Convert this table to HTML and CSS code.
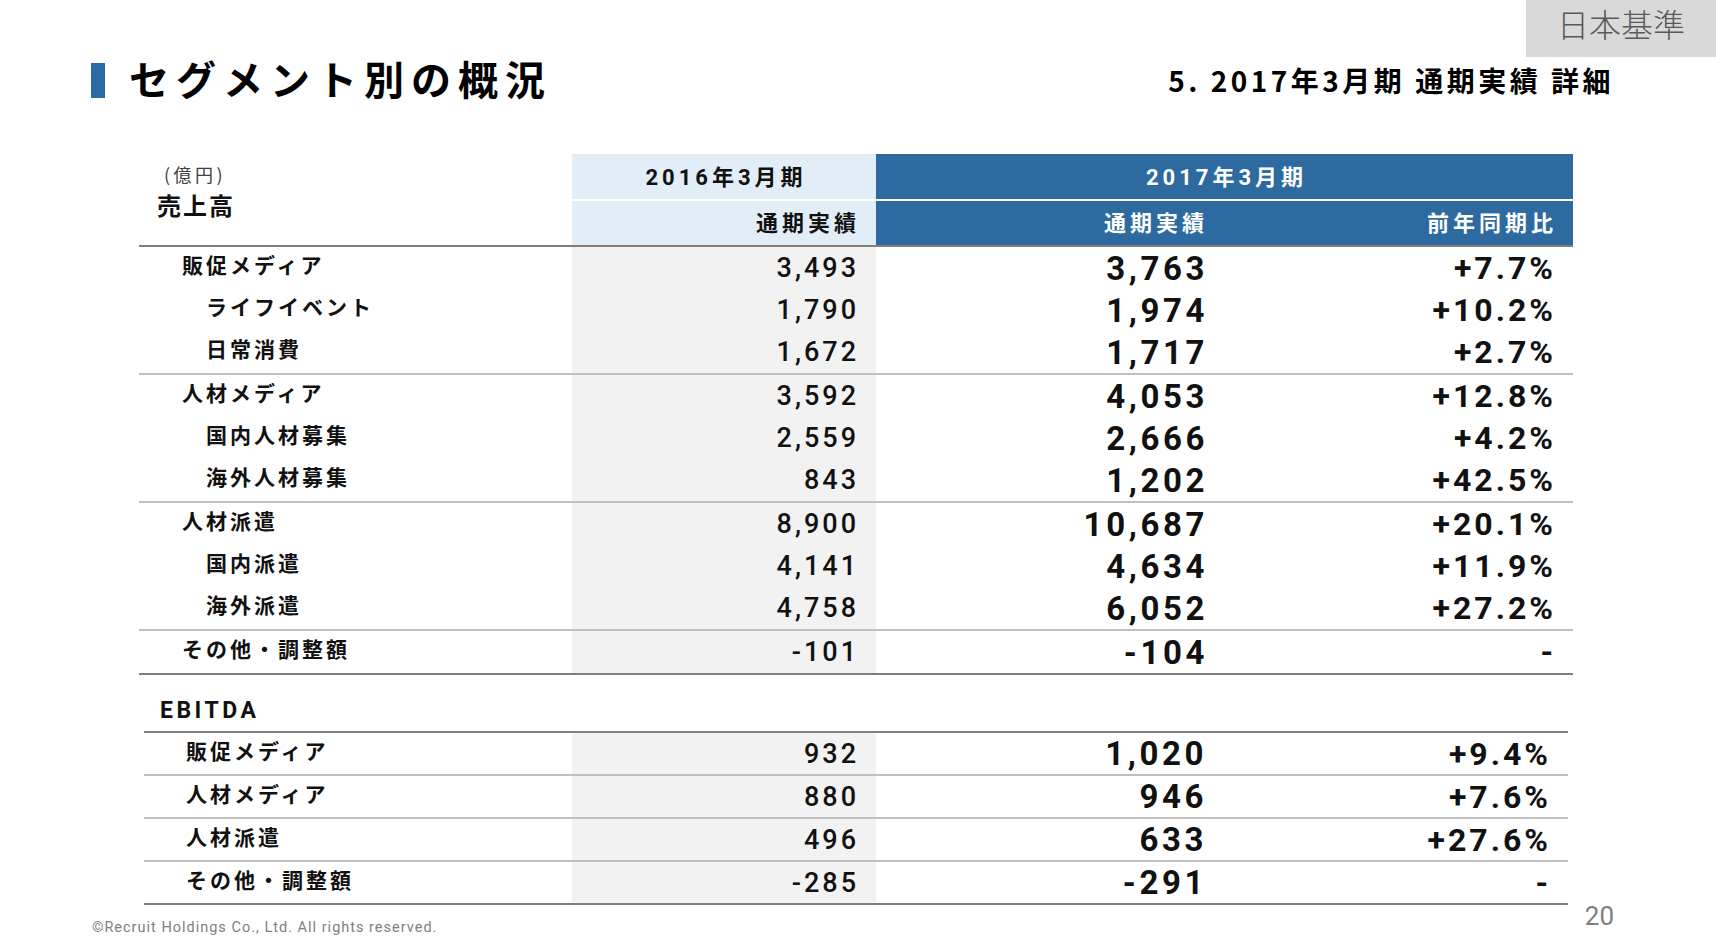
FILE: index.html
```html
<!DOCTYPE html>
<html lang="ja">
<head>
<meta charset="utf-8">
<title>セグメント別の概況</title>
<link rel="stylesheet" href="styles.css">
</head>
<body>
<div class="slide">
  <div class="badge">日本基準</div>
  <header class="header">
    <div class="title"><span class="title-bar"></span><h1>セグメント別の概況</h1></div>
    <div class="subtitle">5. 2017年3月期 通期実績 詳細</div>
  </header>

  <section class="sales">
    <div class="thead">
      <div class="th-label"><span class="unit">(億円)</span><span class="section-name">売上高</span></div>
      <div class="th prev r1">2016年3月期</div>
      <div class="th cur r1 span2">2017年3月期</div>
      <div class="th prev r2">通期実績</div>
      <div class="th cur r2">通期実績</div>
      <div class="th cur r2">前年同期比</div>
    </div>

    <div class="row"><div class="lbl l1">販促メディア</div><div class="pv">3,493</div><div class="cv">3,763</div><div class="pc">+7.7%</div></div>
    <div class="row"><div class="lbl l2">ライフイベント</div><div class="pv">1,790</div><div class="cv">1,974</div><div class="pc">+10.2%</div></div>
    <div class="row sep"><div class="lbl l2">日常消費</div><div class="pv">1,672</div><div class="cv">1,717</div><div class="pc">+2.7%</div></div>

    <div class="row"><div class="lbl l1">人材メディア</div><div class="pv">3,592</div><div class="cv">4,053</div><div class="pc">+12.8%</div></div>
    <div class="row"><div class="lbl l2">国内人材募集</div><div class="pv">2,559</div><div class="cv">2,666</div><div class="pc">+4.2%</div></div>
    <div class="row sep"><div class="lbl l2">海外人材募集</div><div class="pv">843</div><div class="cv">1,202</div><div class="pc">+42.5%</div></div>

    <div class="row"><div class="lbl l1">人材派遣</div><div class="pv">8,900</div><div class="cv">10,687</div><div class="pc">+20.1%</div></div>
    <div class="row"><div class="lbl l2">国内派遣</div><div class="pv">4,141</div><div class="cv">4,634</div><div class="pc">+11.9%</div></div>
    <div class="row sep"><div class="lbl l2">海外派遣</div><div class="pv">4,758</div><div class="cv">6,052</div><div class="pc">+27.2%</div></div>

    <div class="row end"><div class="lbl l1">その他・調整額</div><div class="pv">-101</div><div class="cv">-104</div><div class="pc">-</div></div>
  </section>

  <div class="ebitda-label">EBITDA</div>

  <section class="ebitda">
    <div class="row sep"><div class="lbl">販促メディア</div><div class="pv">932</div><div class="cv">1,020</div><div class="pc">+9.4%</div></div>
    <div class="row sep"><div class="lbl">人材メディア</div><div class="pv">880</div><div class="cv">946</div><div class="pc">+7.6%</div></div>
    <div class="row sep"><div class="lbl">人材派遣</div><div class="pv">496</div><div class="cv">633</div><div class="pc">+27.6%</div></div>
    <div class="row end"><div class="lbl">その他・調整額</div><div class="pv">-285</div><div class="cv">-291</div><div class="pc">-</div></div>
  </section>

  <footer class="footer">
    <span class="copy">©Recruit Holdings Co., Ltd. All rights reserved.</span>
    <span class="page">20</span>
  </footer>
</div>
</body>
</html>
```
FILE: styles.css
```css
html, body {
  margin: 0;
  padding: 0;
  background: #ffffff;
}

body {
  font-family: "Roboto", "Noto Sans CJK JP", "Noto Sans", sans-serif;
  color: #111111;
}

.slide {
  position: relative;
  width: 1716px;
  height: 950px;
  overflow: hidden;
}

/* corner badge */
.badge {
  position: absolute;
  top: 0;
  right: 0;
  width: 190px;
  height: 57px;
  background: #d9d9d9;
  color: #595959;
  font-family: "Noto Sans CJK JP", sans-serif;
  font-weight: 300;
  font-size: 32px;
  line-height: 46px;
  text-align: center;
}

/* title row */
.header {
  box-sizing: border-box;
  height: 154px;
  display: flex;
  justify-content: space-between;
  align-items: flex-start;
  padding: 54px 102px 0 91px;
}

.title {
  display: flex;
  align-items: center;
}

.title-bar {
  display: block;
  width: 14px;
  height: 35px;
  background: #2b6aa3;
  margin-top: 5px;
}

.title h1 {
  margin: 0 0 0 24px;
  font-family: "Noto Sans CJK JP", sans-serif;
  font-weight: 700;
  font-size: 40px;
  line-height: 48px;
  letter-spacing: 7px;
  color: #000;
}

.subtitle {
  margin-top: 6px;
  font-family: "Noto Sans CJK JP", sans-serif;
  font-weight: 700;
  font-size: 28px;
  line-height: 40px;
  letter-spacing: 3.5px;
  color: #000;
}

/* tables */
.sales {
  margin-left: 139px;
  width: 1434px;
}

.thead {
  display: grid;
  grid-template-columns: 433px 304px 348px 349px;
  grid-template-rows: 45px 44px;
  row-gap: 2px;
  border-bottom: 2px solid #7f7f7f;
}

.th-label {
  grid-row: 1 / 3;
  grid-column: 1;
  display: flex;
  flex-direction: column;
  padding-top: 7px;
}

.unit {
  font-family: "Noto Sans CJK JP", sans-serif;
  font-size: 18px;
  line-height: 27px;
  letter-spacing: 3.5px;
  color: #404040;
  padding-left: 25px;
}

.section-name {
  font-family: "Noto Sans CJK JP", sans-serif;
  font-weight: 700;
  font-size: 24px;
  line-height: 34px;
  letter-spacing: 2px;
  padding-left: 18px;
}

.th {
  display: flex;
  align-items: center;
  font-family: "Roboto", "Noto Sans CJK JP", sans-serif;
  font-weight: 700;
  font-size: 22px;
  letter-spacing: 4px;
  padding-bottom: 4px;
  box-sizing: border-box;
}

.th.r1 {
  justify-content: center;
  padding-left: 4px;
}

.th.r2 {
  justify-content: flex-end;
  padding-right: 16px;
}

.th.span2 {
  grid-column: 3 / 5;
}

.th.prev {
  background: #e1eef8;
  color: #111;
}

.th.cur {
  background: #2c6a9f;
  color: #ffffff;
}

.row {
  display: grid;
  grid-template-columns: 433px 304px 348px 349px;
  height: 42px;
}

.row.sep {
  border-bottom: 2px solid #bfbfbf;
}

.row.end {
  border-bottom: 2px solid #7f7f7f;
}

.row > div {
  display: flex;
  align-items: center;
}

.lbl {
  font-family: "Noto Sans CJK JP", sans-serif;
  font-weight: 700;
  font-size: 21px;
  letter-spacing: 3px;
  padding-bottom: 8px;
  box-sizing: border-box;
}

.lbl.l1 { padding-left: 43px; }
.lbl.l2 { padding-left: 67px; }

.pv {
  justify-content: flex-end;
  background: #f2f2f2;
  padding-right: 17px;
  font-weight: 500;
  font-size: 27px;
  letter-spacing: 3px;
}

.cv {
  justify-content: flex-end;
  padding-right: 16px;
  font-weight: 700;
  font-size: 33px;
  letter-spacing: 3.6px;
}

.pc {
  justify-content: flex-end;
  padding-right: 17px;
  font-weight: 700;
  font-size: 32px;
  letter-spacing: 3px;
}

.ebitda-label {
  box-sizing: border-box;
  margin-left: 160px;
  height: 56px;
  padding-top: 14px;
  display: flex;
  align-items: center;
  font-family: "Roboto", sans-serif;
  font-weight: 700;
  font-size: 23px;
  letter-spacing: 3.5px;
}

.ebitda {
  margin-left: 144px;
  width: 1424px;
  border-top: 2px solid #7f7f7f;
}

.ebitda .row {
  grid-template-columns: 428px 304px 347px 345px;
  height: 41px;
}

.ebitda .lbl { padding-left: 42px; }

.ebitda .pc { padding-right: 17px; }

/* footer */
.footer {
  display: flex;
  justify-content: space-between;
  align-items: flex-end;
  margin-top: -3px;
  padding: 0 102px 0 92px;
}

.copy {
  font-family: "Roboto", sans-serif;
  font-size: 14.5px;
  letter-spacing: 1px;
  color: #808080;
  line-height: 20px;
}

.page {
  font-family: "Roboto", sans-serif;
  font-size: 26px;
  line-height: 28px;
  color: #808080;
  margin-bottom: 8px;
}
```
